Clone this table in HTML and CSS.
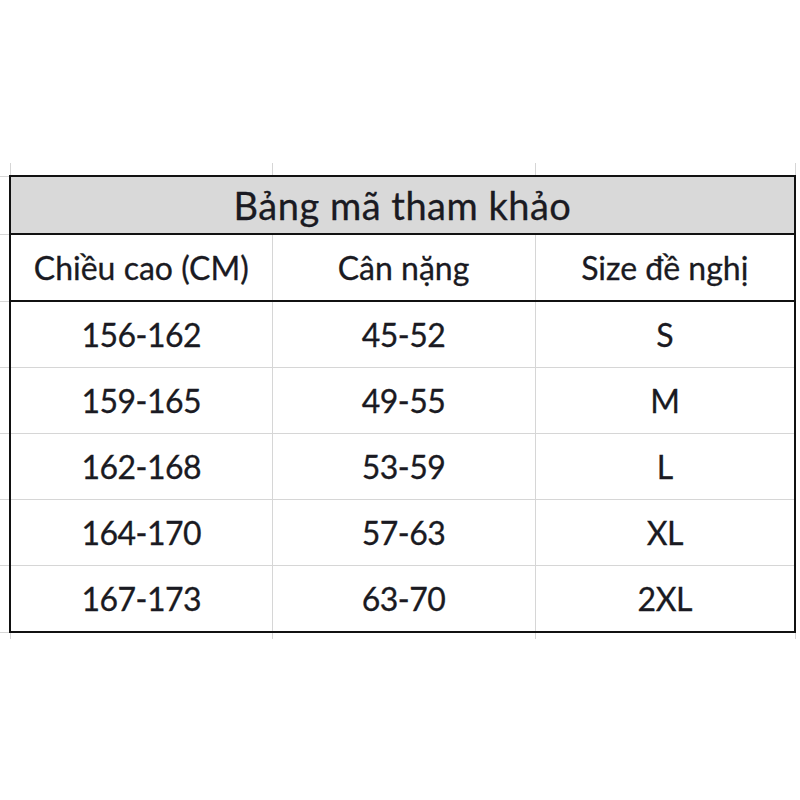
FILE: index.html
```html
<!DOCTYPE html>
<html lang="vi">
<head>
<meta charset="utf-8">
<title>Bảng mã tham khảo</title>
<link rel="stylesheet" href="styles.css">
</head>
<body>
<div class="sheet">
<table class="grid">
  <colgroup>
    <col class="c-stub"><col class="c-1"><col class="c-2"><col class="c-3"><col class="c-tail">
  </colgroup>
  <tr class="r-top"><td></td><td></td><td></td><td></td><td class="tail"></td></tr>
  <tr class="r-title"><td></td><td class="title" colspan="3">Bảng mã tham khảo</td><td class="tail"></td></tr>
  <tr class="r-head"><td></td><td class="head">Chiều cao (CM)</td><td class="head">Cân nặng</td><td class="head">Size đề nghị</td><td class="tail"></td></tr>
  <tr class="r-data"><td></td><td>156-162</td><td>45-52</td><td>S</td><td class="tail"></td></tr>
  <tr class="r-data"><td></td><td>159-165</td><td>49-55</td><td>M</td><td class="tail"></td></tr>
  <tr class="r-data"><td></td><td>162-168</td><td>53-59</td><td>L</td><td class="tail"></td></tr>
  <tr class="r-data"><td></td><td>164-170</td><td>57-63</td><td>XL</td><td class="tail"></td></tr>
  <tr class="r-data r-last"><td></td><td>167-173</td><td>63-70</td><td>2XL</td><td class="tail"></td></tr>
  <tr class="r-bottom"><td></td><td></td><td></td><td></td><td class="tail"></td></tr>
</table>
</div>
</body>
</html>
```
FILE: styles.css
```css
html, body {
  margin: 0;
  padding: 0;
  background: #ffffff;
}

.sheet {
  width: 800px;
  height: 800px;
  padding-top: 163px;
  box-sizing: border-box;
  overflow: hidden;
}

.grid {
  border-collapse: collapse;
  table-layout: fixed;
  width: 801px;
  font-family: "Lato", "Open Sans", "Liberation Sans", sans-serif;
  color: #1a1a22;
  -webkit-text-stroke: 0.3px #1a1a22;
}

.c-stub { width: 10px; }
.c-1 { width: 262px; }
.c-2 { width: 263px; }
.c-3 { width: 260px; }
.c-tail { width: 6px; }

.grid td {
  border: 1px solid #d6d6d6;
  padding: 0;
  text-align: center;
  font-size: 32px;
  line-height: 1;
  white-space: nowrap;
}

.r-data td {
  letter-spacing: -0.5px;
}

.grid td:first-child {
  border-left: none;
}

.grid td.tail {
  border-right: none;
  border-top: none;
  border-bottom: none;
}

.r-top td {
  height: 12px;
  border-top: none;
}

.r-bottom td {
  height: 6px;
  border-bottom: none;
}

.r-title td { height: 56px; }
.r-head td { height: 65px; }
.r-data td { height: 65px; }

.grid .title {
  background: #d9d9d9;
  font-size: 38px;
  letter-spacing: 0.5px;
  border: 2px solid #111111;
}

.r-head td:not(:first-child):not(.tail) {
  border-bottom: 2px solid #111111;
}

.r-head td:nth-child(2),
.r-data td:nth-child(2) {
  border-left: 2px solid #111111;
}

.r-head td:nth-child(4),
.r-data td:nth-child(4) {
  border-right: 2px solid #111111;
}

.r-last td:not(:first-child):not(.tail) {
  border-bottom: 2px solid #111111;
}
```
